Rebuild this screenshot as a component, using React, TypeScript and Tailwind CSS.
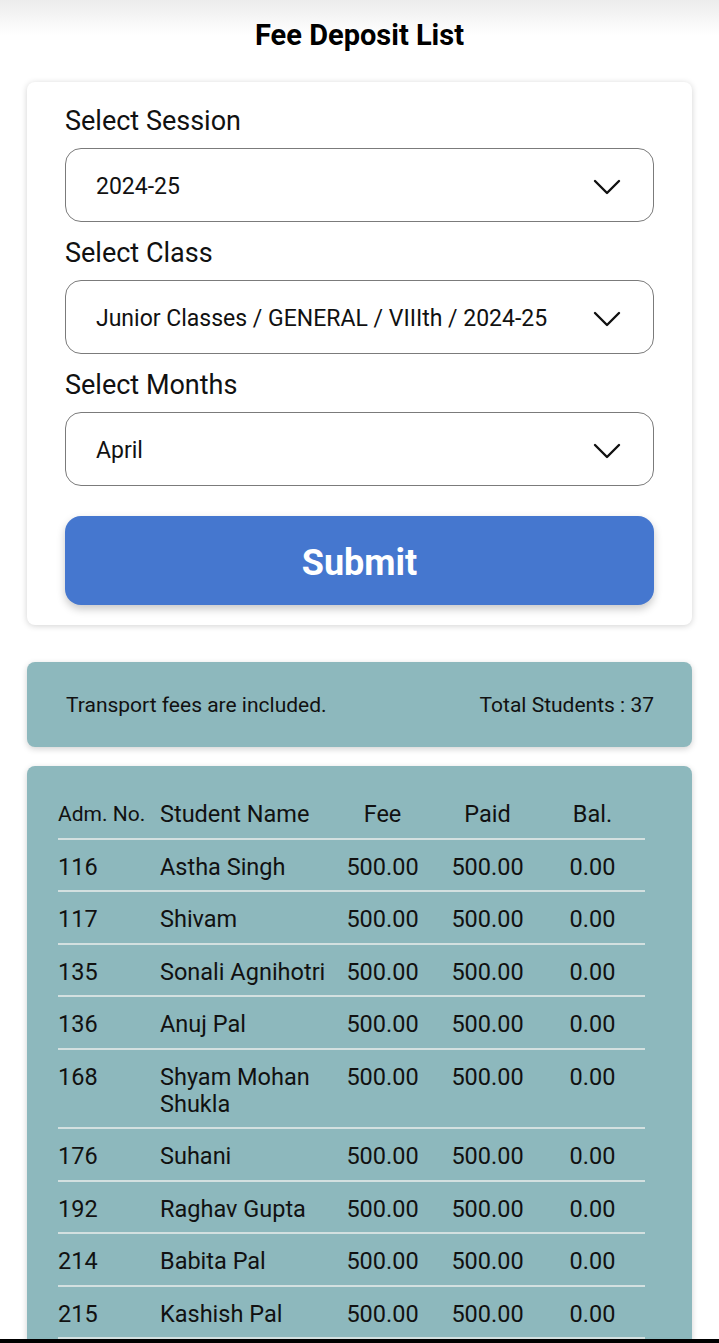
import React from "react";

const font = { fontFamily: "Roboto, 'Noto Sans', sans-serif" };

const rows: { adm: string; name: string }[] = [
  { adm: "116", name: "Astha Singh" },
  { adm: "117", name: "Shivam" },
  { adm: "135", name: "Sonali Agnihotri" },
  { adm: "136", name: "Anuj Pal" },
  { adm: "168", name: "Shyam Mohan Shukla" },
  { adm: "176", name: "Suhani" },
  { adm: "192", name: "Raghav Gupta" },
  { adm: "214", name: "Babita Pal" },
  { adm: "215", name: "Kashish Pal" },
];

const Chevron = () => (
  <svg width="28" height="16" viewBox="0 0 28 16" fill="none">
    <polyline points="2,2 14,14 26,2" stroke="#111" strokeWidth="2.4" strokeLinecap="round" strokeLinejoin="round" />
  </svg>
);

const SelectBox: React.FC<{ value: string }> = ({ value }) => (
  <div className="h-[74px] rounded-[16px] border-[1.5px] border-[#7b7b7b] flex items-center justify-between pl-[30px] pr-[32px] pt-1">
    <span className="text-[23px] text-[#111]">{value}</span>
    <Chevron />
  </div>
);

const Label: React.FC<{ text: string }> = ({ text }) => (
  <div className="h-8 leading-8 text-[27px] text-[#111] mb-[11px]">{text}</div>
);

const cols = "grid grid-cols-[102px_170px_105px_105px_105px] pt-[14px] pb-[9.5px] leading-[27px] border-b-2 border-[#d3e0e0] text-[23.5px]";

export default function App() {
  return (
    <div style={font} className="w-[719px] h-[1343px] overflow-hidden bg-white flex flex-col">
      <div className="h-[1339px] overflow-hidden">
        <div className="h-[70px] bg-gradient-to-b from-[#ececec] via-white to-white flex items-center justify-center">
          <h1 className="text-[29px] font-bold text-black leading-none">Fee Deposit List</h1>
        </div>

        <div className="mx-[27px] mt-3 bg-white rounded-[8px] shadow-[0_1px_6px_rgba(0,0,0,0.18)] px-[38px] pt-[23px] pb-5">
          <Label text="Select Session" />
          <SelectBox value="2024-25" />
          <div className="mt-[15px]">
            <Label text="Select Class" />
            <SelectBox value="Junior Classes / GENERAL / VIIIth / 2024-25" />
          </div>
          <div className="mt-[15px]">
            <Label text="Select Months" />
            <SelectBox value="April" />
          </div>
          <button className="mt-[30px] w-full h-[89px] rounded-[16px] bg-[#4577cf] shadow-[0_4px_8px_rgba(0,0,0,0.22)] text-white text-[36px] font-bold pt-1">
            Submit
          </button>
        </div>

        <div className="mx-[27px] mt-[37px] h-[85px] bg-[#8db8bd] rounded-[8px] shadow-[0_2px_6px_rgba(0,0,0,0.18)] flex items-center justify-between pl-[39px] pr-[38px] pt-[3px] text-[21px] text-[#111]">
          <span>Transport fees are included.</span>
          <span>Total Students : 37</span>
        </div>

        <div className="mx-[27px] mt-[19px] bg-[#8db8bd] rounded-[8px] shadow-[0_2px_6px_rgba(0,0,0,0.18)] pl-[31px] pt-[21px] pb-6">
          <div className="w-[587px] text-[#111]">
            <div className={cols}>
              <div className="text-[21px]">Adm. No.</div>
              <div>Student Name</div>
              <div className="text-center">Fee</div>
              <div className="text-center">Paid</div>
              <div className="text-center">Bal.</div>
            </div>
            {rows.map((r) => (
              <div key={r.adm} className={cols}>
                <div>{r.adm}</div>
                <div>{r.name}</div>
                <div className="text-center">500.00</div>
                <div className="text-center">500.00</div>
                <div className="text-center">0.00</div>
              </div>
            ))}
          </div>
        </div>
      </div>
      <div className="h-1 bg-black" />
    </div>
  );
}
